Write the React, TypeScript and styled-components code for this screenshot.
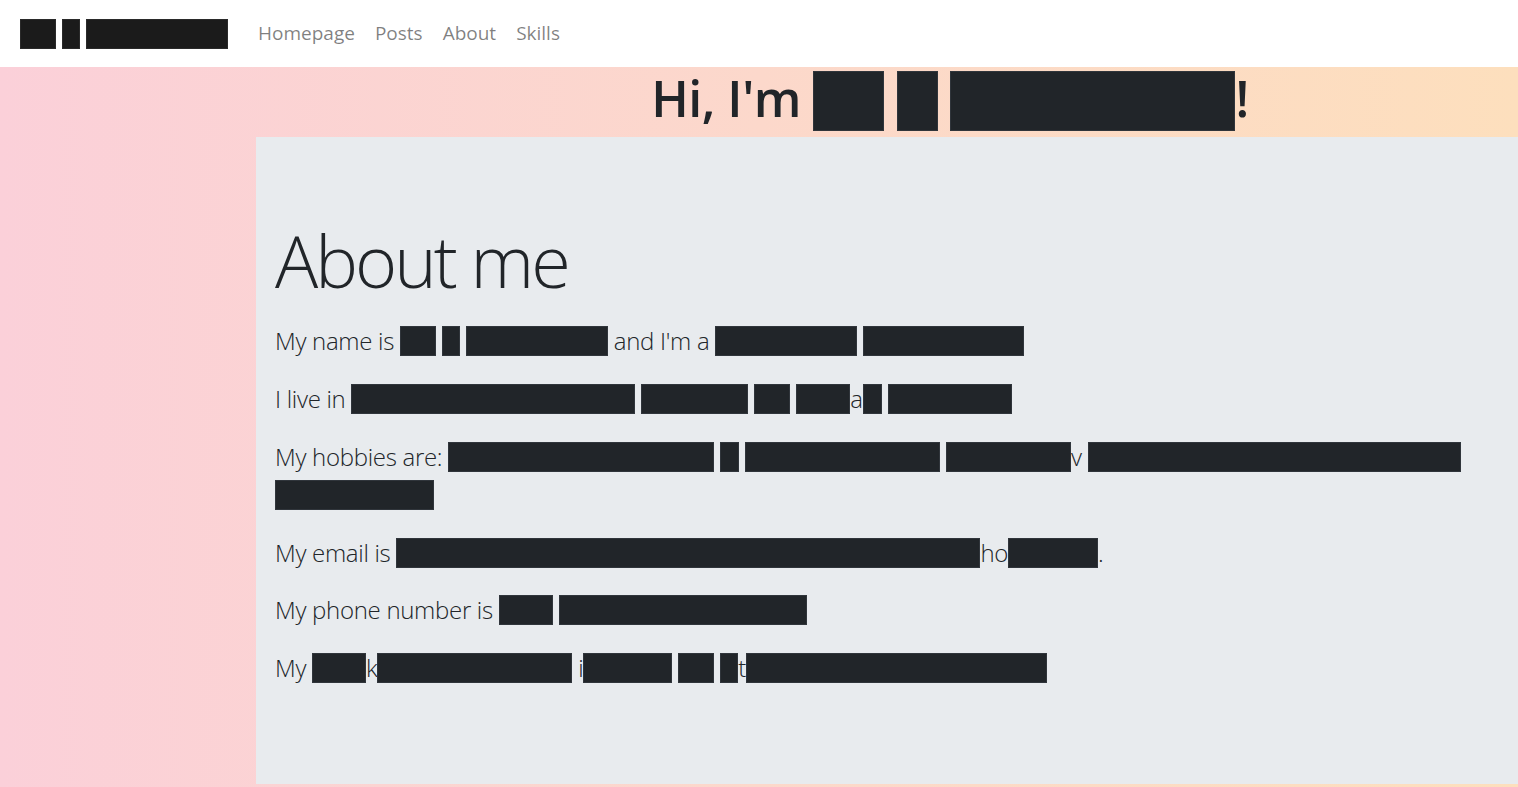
import React from 'react';
import styled, { createGlobalStyle } from 'styled-components';

const GlobalStyle = createGlobalStyle`
  html, body {
    margin: 0;
    padding: 0;
  }
  body {
    font-family: "Open Sans", "Noto Sans", "Liberation Sans", sans-serif;
    color: #212529;
    background: #ffffff;
  }
`;

const Navbar = styled.nav`
  display: flex;
  align-items: center;
  height: 67px;
  padding: 0 20px;
  background: #ffffff;
`;

const Brand = styled.a`
  display: flex;
  gap: 6px;
  margin-right: 20px;
`;

const NavList = styled.ul`
  display: flex;
  list-style: none;
  margin: 0 0 2px;
  padding: 0;
`;

const NavLink = styled.a`
  display: block;
  padding: 0 10px;
  font-size: 19px;
  line-height: 30px;
  color: rgba(0, 0, 0, 0.5);
  text-decoration: none;
`;

const Redact = styled.span<{ $w: number; $h?: number; $drop?: number; $dark?: boolean }>`
  display: inline-block;
  box-sizing: border-box;
  width: ${(p) => p.$w}px;
  height: ${(p) => p.$h ?? 30}px;
  vertical-align: ${(p) => -(p.$drop ?? 6)}px;
  background: ${(p) => (p.$dark ? '#1b1b1b' : '#212529')};
  border: 1px solid ${(p) => (p.$dark ? '#2a2a2a' : '#30353b')};
`;

const Page = styled.div`
  min-height: calc(100vh - 67px);
  background: linear-gradient(90deg, #fbd0d9 0%, #fcd8cb 50%, #fddfbd 100%);
`;

const Hero = styled.header`
  display: flex;
  justify-content: center;
  height: 70px;
  padding-left: 382px;
`;

const HeroTitle = styled.h1`
  margin: 0;
  font-size: 50px;
  font-weight: 600;
  line-height: 62px;
  white-space: nowrap;
  letter-spacing: -0.5px;
`;

const Main = styled.div`
  display: flex;
`;

const Sidebar = styled.aside`
  flex: 0 0 256px;
`;

const Panel = styled.section`
  flex: 1;
  box-sizing: border-box;
  height: 647px;
  padding: 80px 19px 0;
  background: #e8ebee;
`;

const Title = styled.h2`
  margin: 0 0 19px;
  font-size: 72px;
  font-weight: 300;
  line-height: 1.2;
  letter-spacing: -3px;
`;

const Line = styled.p`
  margin: 0 0 19.2px;
  font-size: 24px;
  font-weight: 300;
  line-height: 38.4px;
  letter-spacing: -0.3px;
`;

const App: React.FC = () => {
  return (
    <>
      <GlobalStyle />
      <Navbar>
        <Brand>
          <Redact $w={36} $dark />
          <Redact $w={18} $dark />
          <Redact $w={142} $dark />
        </Brand>
        <NavList>
          <li><NavLink href="#">Homepage</NavLink></li>
          <li><NavLink href="#">Posts</NavLink></li>
          <li><NavLink href="#">About</NavLink></li>
          <li><NavLink href="#">Skills</NavLink></li>
        </NavList>
      </Navbar>
      <Page>
        <Hero>
          <HeroTitle>
            Hi, I'm <Redact $w={71} $h={60} $drop={14} /> <Redact $w={41} $h={60} $drop={14} />{' '}
            <Redact $w={285} $h={60} $drop={14} />!
          </HeroTitle>
        </Hero>
        <Main>
          <Sidebar />
          <Panel>
            <Title>About me</Title>
            <Line>
              My name is <Redact $w={36} /> <Redact $w={18} /> <Redact $w={142} /> and I'm a{' '}
              <Redact $w={142} /> <Redact $w={161} />
            </Line>
            <Line>
              I live in <Redact $w={284} /> <Redact $w={107} /> <Redact $w={36} /> <Redact $w={54} />a
              <Redact $w={19} /> <Redact $w={124} />
            </Line>
            <Line>
              My hobbies are: <Redact $w={266} /> <Redact $w={19} /> <Redact $w={195} />{' '}
              <Redact $w={125} />v <Redact $w={373} /> <Redact $w={159} />
            </Line>
            <Line>
              My email is <Redact $w={584} />ho<Redact $w={90} />.
            </Line>
            <Line>
              My phone number is <Redact $w={54} /> <Redact $w={248} />
            </Line>
            <Line>
              My <Redact $w={54} />k<Redact $w={195} /> i<Redact $w={89} /> <Redact $w={36} />{' '}
              <Redact $w={18} />t<Redact $w={301} />
            </Line>
          </Panel>
        </Main>
      </Page>
    </>
  );
};

export default App;
